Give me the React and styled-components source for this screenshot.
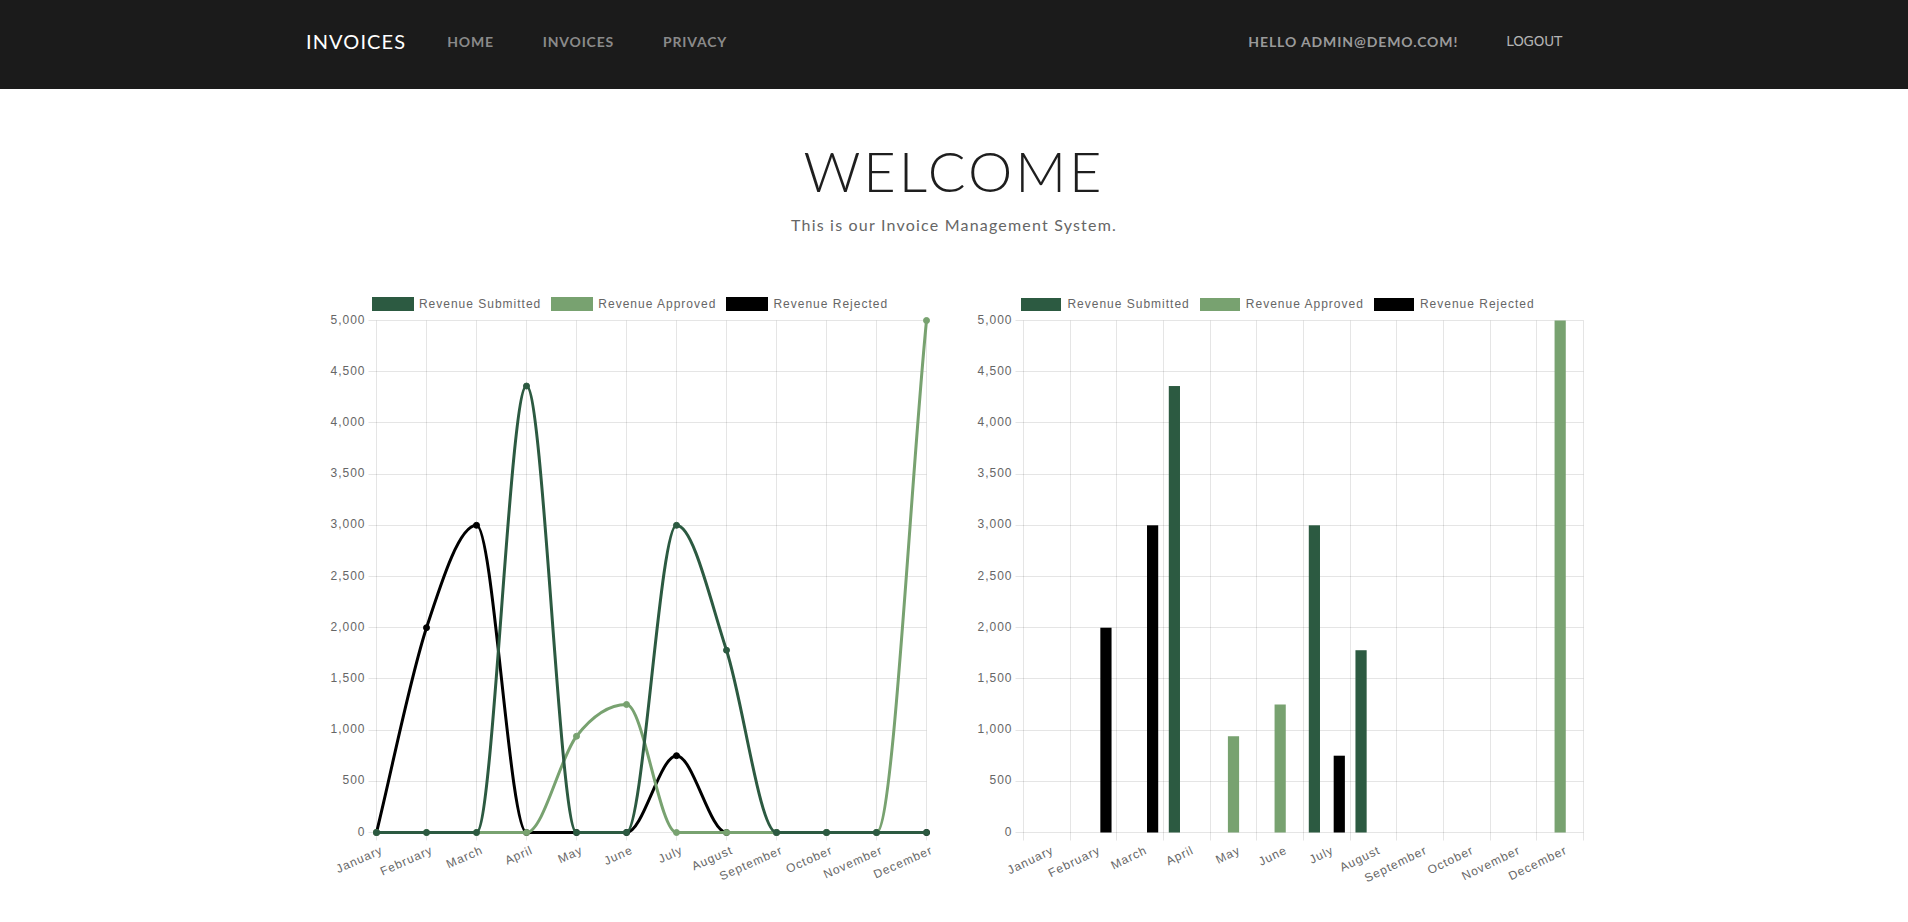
import React from 'react';
import styled, { createGlobalStyle } from 'styled-components';

const GlobalStyle = createGlobalStyle`
  html, body { margin: 0; padding: 0; background: #fff; }
  body { font-family: Lato, "Open Sans", sans-serif; color: #212529; }
`;

const NavBar = styled.nav`
  height: 89px;
  background: #1b1b1b;
`;

const NavInner = styled.div`
  max-width: 1320px;
  height: 100%;
  margin: 0 auto;
  padding: 0 12px 7px;
  box-sizing: border-box;
  display: flex;
  align-items: center;
`;

const Brand = styled.a`
  font-size: 20px;
  color: #fff;
  letter-spacing: 1.1px;
  margin-right: 41px;
  text-decoration: none;
`;

const NavLinks = styled.div`
  display: flex;
  align-items: center;
  gap: 49px;
`;

const NavLink = styled.a`
  font-size: 14px;
  font-weight: 700;
  color: #8a8a8a;
  letter-spacing: 0.8px;
  text-transform: uppercase;
  text-decoration: none;
`;

const RightGroup = styled.div`
  margin-left: auto;
  margin-right: 40px;
  display: flex;
  align-items: center;
  gap: 48px;
`;

const Greeting = styled.span`
  font-size: 14px;
  font-weight: 700;
  color: #9a9a9a;
  letter-spacing: 0.9px;
`;

const Logout = styled.button`
  background: none;
  border: 0;
  padding: 0;
  font-family: "DejaVu Sans", sans-serif;
  font-size: 13.5px;
  letter-spacing: -0.2px;
  color: #b3b3b3;
`;

const Hero = styled.header`
  text-align: center;
  padding-top: 48px;
`;

const Title = styled.h1`
  margin: 0 0 9px;
  font-size: 56px;
  font-weight: 300;
  line-height: 1.2;
  letter-spacing: 3px;
  color: #1e1e1e;
`;

const Subtitle = styled.p`
  margin: 0;
  font-size: 16px;
  line-height: 24px;
  letter-spacing: 1.2px;
  color: #666;
`;

const ChartsRow = styled.section`
  width: 1296px;
  margin: 57px auto 0;
  display: grid;
  grid-template-columns: 648px 648px;
`;

const ChartCard = styled.div`
  display: flex;
  flex-direction: column;
`;

const Legend = styled.div`
  height: 20px;
  display: flex;
  justify-content: center;
  align-items: center;
  gap: 10px;
`;

const LegendItem = styled.div`
  display: flex;
  align-items: center;
  gap: ${(p) => (p.$bordered ? 5 : 6)}px;
`;

const Swatch = styled.span`
  width: 40px;
  height: ${(p) => (p.$bordered ? 12 : 13)}px;
  background: ${(p) => p.$color};
  border: ${(p) => (p.$bordered ? '1.5px solid ' + p.$color : '0')};
`;

const LegendLabel = styled.span`
  font-family: "Liberation Sans", Arial, sans-serif;
  font-size: 12px;
  letter-spacing: 1px;
  color: #666;
`;

const Plot = styled.svg`
  display: block;
  overflow: visible;
  font-family: "Liberation Sans", Arial, sans-serif;
  font-size: 12px;
  letter-spacing: 1px;
`;

const MONTHS = ['January', 'February', 'March', 'April', 'May', 'June', 'July', 'August', 'September', 'October', 'November', 'December'];

const DATASETS = [
  { label: 'Revenue Submitted', color: '#2c5a41', data: [0, 0, 0, 4360, 0, 0, 3000, 1780, 0, 0, 0, 0] },
  { label: 'Revenue Approved', color: '#78a270', data: [0, 0, 0, 0, 940, 1250, 0, 0, 0, 0, 0, 5000] },
  { label: 'Revenue Rejected', color: '#000000', data: [0, 2000, 3000, 0, 0, 0, 750, 0, 0, 0, 0, 0] },
];

const GRID = 'rgba(0,0,0,0.1)';
const TICKS = Array.from({ length: 11 }, (_, i) => i * 500);
const fmt = (v) => v.toLocaleString('en-US');
const crisp = (v) => Math.round(v - 0.5) + 0.5;

function ChartLegend({ bordered }) {
  return (
    <Legend>
      {DATASETS.map((d) => (
        <LegendItem key={d.label} $bordered={bordered}>
          <Swatch $color={d.color} $bordered={bordered} />
          <LegendLabel>{d.label}</LegendLabel>
        </LegendItem>
      ))}
    </Legend>
  );
}

function Axes({ area, vLines, labelXs, rotation }) {
  const { left, right, top, bottom } = area;
  const yFor = (v) => bottom - (v / 5000) * (bottom - top);
  const rad = (rotation * Math.PI) / 180;
  const shift = -7.2 * Math.sin(rad);
  return (
    <g>
      {TICKS.map((t) => (
        <line key={'h' + t} x1={left - 8} x2={right} y1={crisp(yFor(t))} y2={crisp(yFor(t))} stroke={GRID} />
      ))}
      {vLines.map((x, i) => (
        <line key={'v' + i} x1={crisp(x)} x2={crisp(x)} y1={top} y2={bottom + 8} stroke={GRID} />
      ))}
      {TICKS.map((t) => (
        <text key={'yl' + t} x={left - 11} y={yFor(t)} textAnchor="end" dominantBaseline="middle" fill="#666">
          {fmt(t)}
        </text>
      ))}
      {labelXs.map((x, i) => (
        <text
          key={'xl' + i}
          transform={`translate(${x - shift},${bottom + 11}) rotate(${-rotation})`}
          x={0}
          y={7.2}
          textAnchor="end"
          dominantBaseline="middle"
          fill="#666"
        >
          {MONTHS[i]}
        </text>
      ))}
    </g>
  );
}

// Monotone cubic interpolation (same scheme as Chart.js 'monotone')
function monotonePath(pts, area) {
  const n = pts.length;
  const dK = new Array(n).fill(0);
  const mK = new Array(n).fill(0);
  for (let i = 0; i < n - 1; i++) {
    const dx = pts[i + 1].x - pts[i].x;
    dK[i] = dx !== 0 ? (pts[i + 1].y - pts[i].y) / dx : 0;
  }
  for (let i = 0; i < n; i++) {
    if (i === 0) mK[i] = dK[0];
    else if (i === n - 1) mK[i] = dK[i - 1];
    else mK[i] = Math.sign(dK[i - 1]) !== Math.sign(dK[i]) ? 0 : (dK[i - 1] + dK[i]) / 2;
  }
  for (let i = 0; i < n - 1; i++) {
    if (Math.abs(dK[i]) < 1e-9) {
      mK[i] = 0;
      mK[i + 1] = 0;
      continue;
    }
    const a = mK[i] / dK[i];
    const b = mK[i + 1] / dK[i];
    const sq = a * a + b * b;
    if (sq <= 9) continue;
    const tau = 3 / Math.sqrt(sq);
    mK[i] = a * tau * dK[i];
    mK[i + 1] = b * tau * dK[i];
  }
  const cx = (v) => Math.max(area.left, Math.min(area.right, v));
  const cy = (v) => Math.max(area.top, Math.min(area.bottom, v));
  let d = `M${pts[0].x},${pts[0].y}`;
  for (let i = 1; i < n; i++) {
    const p0 = pts[i - 1];
    const p1 = pts[i];
    const delta = (p1.x - p0.x) / 3;
    const c1x = cx(p0.x + delta);
    const c1y = cy(p0.y + delta * mK[i - 1]);
    const c2x = cx(p1.x - delta);
    const c2y = cy(p1.y - delta * mK[i]);
    d += ` C${c1x},${c1y} ${c2x},${c2y} ${p1.x},${p1.y}`;
  }
  return d;
}

function LineChart() {
  const area = { left: 70.5, right: 620.5, top: 6.5, bottom: 518.5 };
  const step = (area.right - area.left) / 11;
  const xs = MONTHS.map((_, i) => area.left + i * step);
  const yFor = (v) => area.bottom - (v / 5000) * (area.bottom - area.top);
  const ordered = [...DATASETS].reverse();
  return (
    <ChartCard>
      <ChartLegend bordered />
      <Plot width="648" height="578" viewBox="0 0 648 578">
        <Axes area={area} vLines={xs} labelXs={xs} rotation={24} />
        {ordered.map((ds) => {
          const pts = ds.data.map((v, i) => ({ x: xs[i], y: yFor(v) }));
          return (
            <g key={ds.label}>
              <path d={monotonePath(pts, area)} fill="none" stroke={ds.color} strokeWidth="3" />
              {pts.map((p, i) => (
                <circle key={i} cx={p.x} cy={p.y} r="3" fill={ds.color} stroke={ds.color} strokeWidth="1" />
              ))}
            </g>
          );
        })}
      </Plot>
    </ChartCard>
  );
}

function BarChart() {
  const area = { left: 69.5, right: 629.5, top: 6.5, bottom: 518.5 };
  const cw = (area.right - area.left) / 12;
  const bounds = Array.from({ length: 13 }, (_, i) => area.left + i * cw);
  const centers = MONTHS.map((_, i) => area.left + (i + 0.5) * cw);
  const yFor = (v) => area.bottom - (v / 5000) * (area.bottom - area.top);
  const slot = (cw * 0.8) / 3;
  const bw = slot * 0.9;
  return (
    <ChartCard>
      <ChartLegend />
      <Plot width="648" height="578" viewBox="0 0 648 578">
        <Axes area={area} vLines={bounds} labelXs={centers} rotation={26} />
        {DATASETS.map((ds, j) =>
          ds.data.map((v, i) => {
            if (!v) return null;
            const x = area.left + i * cw + cw * 0.1 + slot * j + (slot - bw) / 2;
            const y = yFor(v);
            return <rect key={ds.label + i} x={x} y={y} width={bw} height={area.bottom - y} fill={ds.color} />;
          })
        )}
      </Plot>
    </ChartCard>
  );
}

export default function App() {
  return (
    <>
      <GlobalStyle />
      <NavBar>
        <NavInner>
          <Brand href="#">INVOICES</Brand>
          <NavLinks>
            <NavLink href="#">Home</NavLink>
            <NavLink href="#">Invoices</NavLink>
            <NavLink href="#">Privacy</NavLink>
          </NavLinks>
          <RightGroup>
            <Greeting>HELLO ADMIN@DEMO.COM!</Greeting>
            <Logout type="button">LOGOUT</Logout>
          </RightGroup>
        </NavInner>
      </NavBar>
      <Hero>
        <Title>WELCOME</Title>
        <Subtitle>This is our Invoice Management System.</Subtitle>
      </Hero>
      <ChartsRow>
        <LineChart />
        <BarChart />
      </ChartsRow>
    </>
  );
}
